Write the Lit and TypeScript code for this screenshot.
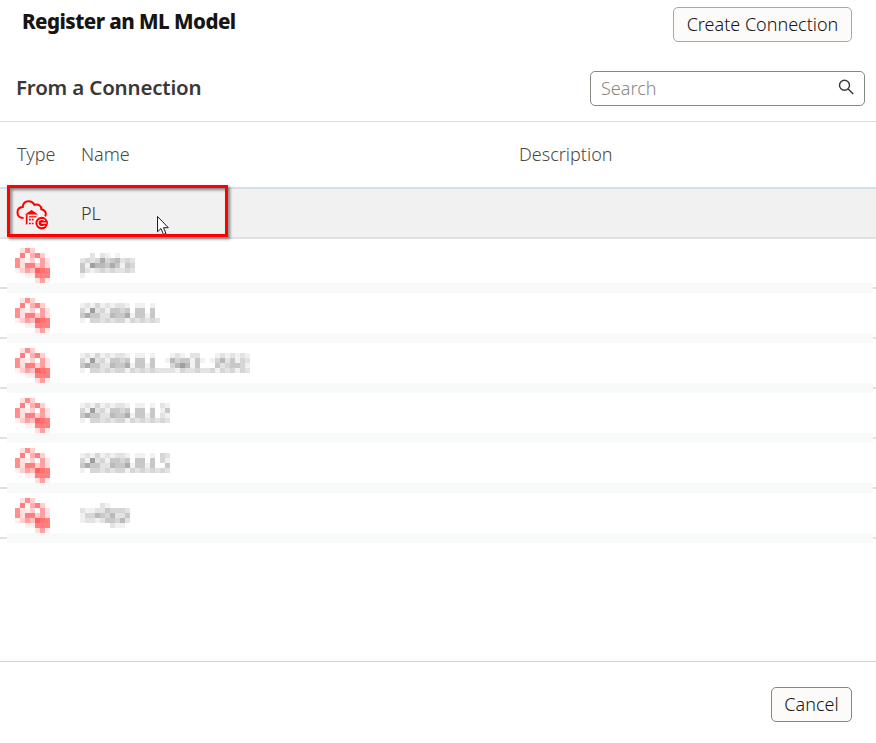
import { LitElement, html, svg, css } from "lit";
import { customElement, property } from "lit/decorators.js";

// Each digit is the strength of one 5px block of an obscured picture.
const CLOUD_BLOCKS = ["0273000", "0805830", "7213062", "7288362", "1364a98", "0011888", "0000261"];

const REDBULL = ["1213121221011010", "3172314434044040", "4644225446144140", "1033232331323232"];
const extend = (tails: string[]) => REDBULL.map((r, i) => r + tails[i]);

const NAMES: string[][] = [
  ["00202101000", "23236345232", "41755464143", "42123232232", "10000000000"],
  REDBULL,
  extend(["001210220001212121", "015344141013524132", "003575140004234431", "222132232231323132"]),
  extend(["21", "14", "21", "32"]),
  extend(["32", "31", "04", "32"]),
  ["0000210000", "2112243332", "1335435224", "1221244352", "0000002110"],
];

@customElement("pixel-blocks")
export class PixelBlocks extends LitElement {
  @property({ attribute: false }) rows: string[] = [];
  @property() tone = "#000";
  @property({ type: Number }) gain = 0.06;
  static styles = css`
    :host { display: block; }
    svg { display: block; }
  `;
  render() {
    const w = this.rows[0].length * 5;
    const h = this.rows.length * 5;
    return html`<svg width=${w} height=${h} shape-rendering="crispEdges" aria-hidden="true">
      ${this.rows.map((r, y) =>
        [...r].map((c, x) =>
          c === "0"
            ? null
            : svg`<rect x=${x * 5} y=${y * 5} width="5" height="5" fill=${this.tone} fill-opacity=${Math.min(1, parseInt(c, 16) * this.gain)}></rect>`
        )
      )}
    </svg>`;
  }
}

@customElement("app-root")
export class AppRoot extends LitElement {
  static styles = css`
    :host {
      display: flex;
      flex-direction: column;
      height: 743px;
      box-sizing: border-box;
      background: #fff;
      color: #3a3632;
      font-family: "Noto Sans", "Open Sans", sans-serif;
      font-size: 18px;
      font-weight: 350;
      overflow: hidden;
    }
    .top {
      display: flex;
      justify-content: space-between;
      align-items: flex-start;
      height: 56px;
      box-sizing: border-box;
      padding: 7px 24px 0 22px;
    }
    h1, h2 { margin: 0; white-space: nowrap; }
    h1 { font-size: 20.5px; line-height: 29px; font-weight: 800; color: #161513; letter-spacing: -0.54px; }
    h2 { font-size: 20.5px; line-height: 33px; font-weight: 600; color: #3a3836; letter-spacing: -0.18px; }
    button {
      height: 35px;
      box-sizing: border-box;
      border: 1px solid #8b8580;
      border-radius: 5px;
      background: #fcfbfa;
      color: #161513;
      font: inherit;
      line-height: 33px;
      padding: 0;
      white-space: nowrap;
    }
    .create { width: 179px; border-color: #aaa6a2; }
    .cancel { width: 81px; }
    .bar {
      display: flex;
      justify-content: space-between;
      height: 66px;
      box-sizing: border-box;
      padding: 15px 11px 0 16px;
      border-bottom: 1px solid #dfdfdf;
    }
    .search {
      display: flex;
      justify-content: space-between;
      width: 275px;
      height: 35px;
      box-sizing: border-box;
      border: 1px solid #8b8580;
      border-radius: 5px;
      padding: 0 9px 0 10px;
      line-height: 33px;
      color: #8a8784;
    }
    .search svg { margin-top: 6px; }
    .cols {
      display: grid;
      grid-template-columns: 81px 438px 1fr;
    }
    .head {
      height: 67px;
      box-sizing: border-box;
      border-bottom: 2px solid #d5dfe6;
      line-height: 65px;
      color: #4b4845;
    }
    .type { padding-left: 17px; }
    .row {
      height: 50px;
      box-sizing: border-box;
      border-bottom: 2px solid #e0e0e0;
    }
    .selected {
      position: relative;
      background: #f1f1f1;
      line-height: 48px;
    }
    .cloud { margin: 10px 0 0 16px; }
    .blurred {
      grid-template-columns: 15px 65px 1fr;
      align-items: start;
    }
    .blurred pixel-blocks { margin-top: 9px; grid-column: 2; }
    .blurred .name { margin-top: 14px; grid-column: 3; }
    .strip {
      height: 10px;
      margin: -6px 3px -4px 7px;
      background: #f8faf9;
      position: relative;
    }
    .mark {
      position: absolute;
      left: 7px;
      top: -4px;
      width: 221px;
      height: 52px;
      box-sizing: border-box;
      border: 3px solid #ff0000;
      filter: drop-shadow(2px 2px 1.5px rgba(0, 0, 0, 0.5));
      z-index: 2;
    }
    .pointer { position: absolute; left: 156px; top: 26px; }
    .foot {
      display: flex;
      justify-content: flex-end;
      margin-top: auto;
      height: 82px;
      box-sizing: border-box;
      border-top: 1px solid #d0d0d0;
      padding: 25px 24px 0 0;
    }
  `;

  render() {
    return html`
      <header class="top">
        <h1>Register an ML Model</h1>
        <button class="create">Create Connection</button>
      </header>
      <section class="bar">
        <h2>From a Connection</h2>
        <div class="search">
          <span>Search</span>
          <svg width="18" height="18" viewBox="0 0 18 18" fill="none" stroke="#3a3632" stroke-width="1.4">
            <circle cx="7.500" cy="7.300" r="5"></circle>
            <path d="M11.200 11 16.200 15.900"></path>
          </svg>
        </div>
      </section>
      <div class="cols head">
        <span class="type">Type</span><span>Name</span><span>Description</span>
      </div>
      <div class="cols row selected">
        <svg class="cloud" width="34" height="32" viewBox="0 0 34 32" fill="none" stroke="#ff0000">
          <path d="M7.500 19.100C3.900 19 1.500 16.800 1.500 13.500c0-3.100 2.200-5.200 5.200-5.400C7 4.500 9.400 2.200 12.600 2.200c2.500 0 4.600 1.200 5.700 3.600 3.900-1.200 7.200.900 7 4.500 2.700.700 4.500 2.300 4.500 4.700 0 .9-.300 1.800-.900 2.400" stroke-width="2"></path>
          <path d="M8.800 15.400 15.500 11l6.700 4.400z" fill="#ff0000" stroke="none"></path>
          <path d="M10.700 15.500v9.900" stroke-width="1.700"></path>
          <path d="M13 17.800h7.500" stroke-width="1.200"></path>
          <path d="M13 20.700h4.800M13 24.500h4.800" stroke-width="1.700" stroke-dasharray="1.800 1"></path>
          <circle cx="25.700" cy="24.100" r="7" fill="#fff" stroke="none"></circle>
          <circle cx="25.700" cy="24.100" r="6.300" fill="#ff0000" stroke="none"></circle>
          <path d="M28.900 21.700C28.400 20.900 27.400 20.500 25.600 20.500a3.600 3.600 0 0 0 0 7.200c1.800 0 2.800-.400 3.300-1.200M25.400 24.100h5" stroke="#fff" stroke-width="1.200"></path>
        </svg>
        <span>PL</span><span></span>
        <svg class="pointer" width="14" height="20" viewBox="0 0 14 20">
          <path d="M1.500 1.500v15.300l3.500-3.300 2.500 6 2.500-1-2.500-5.800h4.800z" fill="#fff" stroke="#1a1a2a" stroke-width="1"></path>
        </svg>
        <div class="mark"></div>
      </div>
      ${NAMES.map(
        (n) => html`
          <div class="cols row blurred">
            <pixel-blocks .rows=${CLOUD_BLOCKS} tone="#ff0000" gain="0.0625"></pixel-blocks>
            <pixel-blocks class="name" .rows=${n} tone="#000000" gain="0.054"></pixel-blocks>
          </div>
          <div class="strip"></div>
        `
      )}
      <footer class="foot"><button class="cancel">Cancel</button></footer>
    `;
  }
}
